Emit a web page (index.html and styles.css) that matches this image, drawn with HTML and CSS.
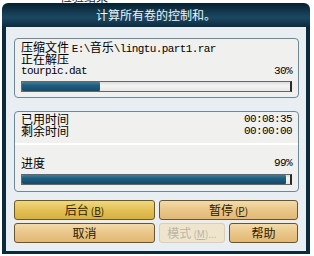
FILE: index.html
```html
<!DOCTYPE html>
<html lang="zh-CN">
<head>
    <meta charset="UTF-8">
    <title>计算所有卷的控制和</title>
    <link rel="stylesheet" href="styles.css">
</head>
<body>
<div class="frag"><span>检验结果</span></div>
<div class="win">
    <div class="titlebar">计算所有卷的控制和。</div>
    <div class="main">
        <div class="group g1">
            <div class="row">压缩文件 <span class="lat">E:\</span>音乐<span class="lat">\lingtu.part1.rar</span></div>
            <div class="row">正在解压</div>
            <div class="row split"><span class="lat">tourpic.dat</span><span class="lat">30%</span></div>
            <div class="bar"><div class="fill" style="width: 29%"></div></div>
        </div>
        <div class="group g2">
            <div class="row split"><span>已用时间</span><span class="lat">00:08:35</span></div>
            <div class="row split"><span>剩余时间</span><span class="lat">00:00:00</span></div>
            <div class="sep"></div>
            <div class="row split"><span>进度</span><span class="lat">99%</span></div>
            <div class="bar"><div class="fill" style="width: 98.5%"></div></div>
        </div>
        <div class="buttons">
            <div class="btn focus">后台<span class="key">(<u>B</u>)</span></div>
            <div class="btn wide">暂停<span class="key">(<u>P</u>)</span></div>
            <div class="btn">取消</div>
            <div class="btn off">模式<span class="key">(<u>M</u>)...</span></div>
            <div class="btn">帮助</div>
        </div>
    </div>
</div>
</body>
</html>
```

FILE: styles.css
```css
*{
    margin: 0;
    padding: 0;
    box-sizing: border-box;
}
body{
    background: #fff;
    font-family: "Noto Sans CJK SC", sans-serif;
    font-size: 12px;
    color: #000;
}
.frag{
    height: 3px;
    overflow: hidden;
    padding-left: 60px;
    line-height: 12px;
}
.frag span{
    display: block;
    margin-top: -9px;
    color: #222;
}
.win{
    width: 308px;
    margin-left: 2px;
}
.titlebar{
    height: 24px;
    line-height: 23px;
    text-align: center;
    color: #eef4f8;
    font-size: 12px;
    border-radius: 6px 6px 0 0;
    background: linear-gradient(#06202f, #163f56 45%, #1a4861 60%, #0b2c40);
}
.main{
    height: 227px;
    background: #e8eef1;
    border-left: 4px solid #0b2a3c;
    border-right: 4px solid #0b2a3c;
    border-bottom: 3px solid #0b2a3c;
    padding: 11px 7px 0 8px;
}
.group{
    background: #f0f0ef;
    border: 1px solid #6f8898;
    border-radius: 4px;
    padding: 2px 6px 5px 6px;
}
.g2{
    margin-top: 13px;
    padding-top: 1px;
    padding-bottom: 6px;
}
.row{
    height: 12px;
    line-height: 12px;
    white-space: nowrap;
}
.split{
    display: flex;
    justify-content: space-between;
}
.lat{
    font-family: "Liberation Mono", monospace;
    font-size: 11px;
    letter-spacing: -0.6px;
}
.sep{
    height: 2px;
    background: #fff;
    margin: 6px -6px 12px -6px;
}
.bar{
    height: 11px;
    margin-top: 4px;
    border: 1px solid #666;
    border-right: 2px solid #2a2a2a;
    background: linear-gradient(#dcdcdc, #f4f4f4 40%, #e6e6e6);
}
.g2 .bar{
    margin-top: 5px;
}
.fill{
    height: 100%;
    border-radius: 1px;
    background: linear-gradient(#3f7c9b, #1f5d7d 40%, #154b68);
}
.buttons{
    display: grid;
    grid-template-columns: 141px 66px 69px;
    grid-template-rows: 20px 20px;
    column-gap: 4px;
    row-gap: 3px;
    margin-top: 8px;
}
.btn{
    border: 1px solid #6a5530;
    border-radius: 3px;
    background: linear-gradient(#f3dba9, #e9c688 50%, #e2b875);
    text-align: center;
    line-height: 18px;
    color: #2b2000;
}
.btn.wide{
    grid-column: 2 / 4;
}
.btn.focus{
    background: linear-gradient(#f0d884, #e2c154 50%, #d8b044);
    border-color: #6e5a1e;
}
.btn.off{
    background: #efe5cc;
    border-color: #dacfb4;
    color: #bdb4a2;
}
.key{
    font-size: 10px;
    margin-left: 2px;
}
```
